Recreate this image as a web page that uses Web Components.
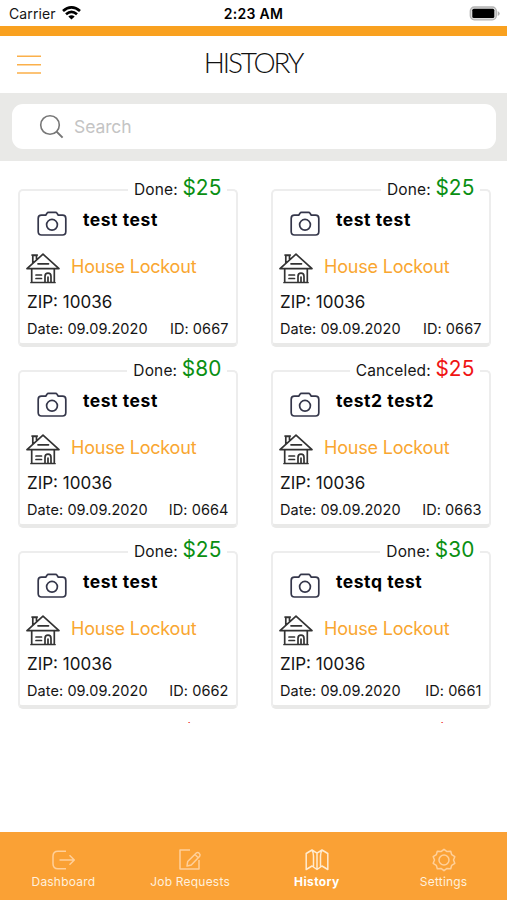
<!DOCTYPE html>
<html lang="en"><head><meta charset="utf-8"><title>History</title>
<style>
html,body{margin:0;height:900px;overflow:hidden;background:#fff}
body{font-family:Inter,"Liberation Sans",sans-serif;color:#151515}
</style></head><body>
<history-app></history-app>
<script>
const define=(name,html)=>customElements.define(name,class extends HTMLElement{
  constructor(){super();this.attachShadow({mode:'open'})}
  connectedCallback(){this.shadowRoot.innerHTML=html(this);}
});

define('status-bar',()=>`<style>
:host{display:grid;grid-template-columns:1fr auto 1fr;align-items:center;height:26px;padding:1px 7px 0 9px;box-sizing:border-box;font-size:14px}
.l{display:flex;align-items:center;gap:6px;letter-spacing:.1px;margin-top:-1px}
.t{font-weight:600;font-size:14px;letter-spacing:.3px;color:#000;margin-right:2px}
.r{justify-self:end;display:flex}svg{display:block}
</style>
<div class="l"><span>Carrier</span><svg width="19" height="14" viewBox="0 0 19 14" fill="none" stroke="#000" stroke-width="2.7"><path d="M1 5.1Q9.5-2.3 18 5.1M4 8.3Q9.500 3.500 15 8.300"/><path d="M9.500 13.500 6.300 10.500Q9.500 7.800 12.700 10.500Z" fill="#000" stroke="none"/></svg></div>
<div class="t">2:23 AM</div>
<div class="r"><svg width="31" height="15" viewBox="0 0 31 15"><rect x="1.300" y="1" width="26" height="12.800" rx="4" fill="#ddd" stroke="#b4b4b4" stroke-width="1.300"/><rect x="3.300" y="2.800" width="22" height="9.200" rx="1.500" fill="#000"/><path d="M28.700 5v5q2-1 2-2.500t-2-2.500z" fill="#b0b0b0"/></svg></div>`);

define('page-header',()=>`<style>
:host{display:grid;grid-template-columns:1fr auto 1fr;align-items:center;height:67px;border-top:10px solid #f9a11f;box-sizing:border-box;padding:0 17px}
h1{margin:0;font:300 28px/30px Lato,sans-serif;letter-spacing:-2.200px;color:#111;padding:0 1px 6px 0}
svg{display:block}
</style>
<svg width="24" height="20" viewBox="0 0 24 20" stroke="#fbb04a" stroke-width="1.500"><path d="M0 1.300H24M0 9.700H24M0 18H24"/></svg>
<h1><slot></slot></h1><span></span>`);

define('search-field',()=>`<style>
:host{display:block;background:#e9e9e7;padding:11px 11.500px 11px 12px;height:67.500px;box-sizing:border-box}
div{height:45px;border-radius:11px;background:#fff;display:flex;align-items:center;padding-left:27px;gap:10px;font-size:17.500px;color:#c4c4c4;letter-spacing:-.1px}
</style>
<div><svg width="25" height="25" viewBox="0 0 25 25" fill="none" stroke="#777" stroke-width="1.600"><circle cx="11" cy="11" r="9.300"/><path d="m17.600 17.600 6 6" stroke-width="2"/></svg><span><slot></slot></span></div>`);

define('camera-icon',()=>`<style>:host,svg{display:block}</style>
<svg width="30" height="26" viewBox="0 0 30 26" fill="none" stroke="#34364a" stroke-width="1.700" stroke-linejoin="round"><path d="M4.500 4.200H8.700L10 2.200Q10.500 1.300 11.500 1.300H18.500Q19.500 1.300 20 2.200L21.300 4.200H25.500Q28.800 4.200 28.800 7.500V20.500Q28.800 24 25.500 24H4.500Q1.200 24 1.200 20.500V7.500Q1.200 4.200 4.500 4.200Z"/><circle cx="15" cy="13.800" r="5.400"/></svg>`);

define('house-icon',()=>`<style>:host,svg{display:block}</style>
<svg width="34" height="31" viewBox="0 0 34 31" fill="none" stroke="#333" stroke-width="1.700" stroke-linejoin="round" stroke-linecap="round"><path d="M6.800 10V2.500H10.500V6M6 2H11.300M17 1.200 1 15.600H33ZM12 10.800H22.500M5.700 15.600V29.500H28.300V15.600M10 22H15.500M10 25.500H15.500M19 29.300V23.500Q19 20.200 22 20.200T25 23.500V29.300M22 24V28.500M5 29.500H29"/></svg>`);

define('job-card',e=>{const a=n=>e.getAttribute(n)||'';
const peek=!e.hasAttribute('name');
return `<style>
:host{display:block;position:relative;height:158px;box-sizing:border-box;border:2px solid #ededed;border-top-width:2.500px;border-bottom:4px solid #e9e9e8;border-radius:5px;padding:0 7px 0 7.500px}
.legend{position:absolute;right:9px;top:-16px;background:#fff;padding:0 5px 0 6px;height:26px;line-height:26px;white-space:nowrap;font-size:15.500px;letter-spacing:.15px}
.peek{top:-14px}
b{font-weight:400;font-size:20.800px;color:#0a8f12}
:host([state=Canceled]) b{color:#f01414}
.who{display:flex;height:48px;padding:20px 0 0 10px;gap:16px;box-sizing:border-box}
.who span{font-weight:700;font-size:17.500px;line-height:20px;color:#000;margin-top:-1px;letter-spacing:.55px}
.job{display:flex;gap:11px;height:31px;margin:14px 0 0 -1px;color:#f9a630;font-size:18px;line-height:28px;letter-spacing:-.2px}
.zip{font-size:17px;line-height:20px;margin-top:8px;letter-spacing:0}
.meta{display:flex;justify-content:space-between;font-size:14.500px;line-height:18px;margin-top:8px;letter-spacing:.08px}
span{white-space:nowrap}
</style>
<div class="legend${peek?' peek':''}">${peek?'':a('state')+': '}<b>${a('price')}</b></div>`+(peek?'':`
<div class="who"><camera-icon></camera-icon><span>${a('name')}</span></div>
<div class="job"><house-icon></house-icon><span>House Lockout</span></div>
<div class="zip">ZIP: 10036</div>
<div class="meta"><span>Date: 09.09.2020</span><span>ID: ${a('job')}</span></div>`)});

define('job-list',()=>`<style>
:host{display:grid;grid-template-columns:220px 220px;column-gap:33px;row-gap:23px;grid-auto-rows:158px;padding:28.500px 0 0 17.500px;height:562px;box-sizing:border-box;overflow:hidden}
</style><slot></slot>`);

const icons={
dashboard:'<path d="M15 3.200H7Q2 3.200 2 8.200V15.800Q2 20.800 7 20.800H15M8.500 12H23M18.500 7.200 23.300 12 18.500 16.800"/>',
jobs:'<path d="M12 2H2V21H21V12M9 18 9.700 13.500 18.300 5Q19.700 3.800 21.200 5.200T21.700 8.200L13.300 17ZM17 6.500 20 9.500"/>',
history:'<path d="M1.200 5.500 7 2 12 5.200 17 2 22.800 5.500V21.500L17 18 12 21.500 7 18 1.200 21.500ZM7 2.500Q8.500 4 8.500 8V18.500M17 2.500Q15.500 4 15.500 8V18.500M12 5.500V21"/>',
settings:'<path d="M12 1.300 15 3.600 18.700 3.200 19.700 6.700 22.800 8.700 21.500 12 22.800 15.300 19.700 17.300 18.700 20.800 15 20.400 12 22.700 9 20.400 5.300 20.800 4.300 17.300 1.200 15.300 2.500 12 1.200 8.700 4.300 6.700 5.300 3.200 9 3.600Z"/><circle cx="12" cy="12" r="5"/>'};
define('tab-item',e=>`<style>
:host{display:flex;flex-direction:column;align-items:center;flex:1 1 0;padding-top:16px;color:#fff;font-size:12px;line-height:16px;letter-spacing:.2px}
svg{stroke:#ffd09a;margin-bottom:2px}span{color:#fff0dc}
:host([active]) span{font-weight:700;color:#fff;letter-spacing:.4px}:host([active]) svg{stroke:#ffebcf}
</style><svg width="24" height="24" viewBox="0 0 24 24" fill="none" stroke-width="1.500" stroke-linejoin="round">${icons[e.getAttribute('icon')]}</svg><span><slot></slot></span>`);

define('tab-bar',()=>`<style>:host{display:flex;height:68px;background:#faa135}</style><slot></slot>`);

define('history-app',()=>`<style>:host{display:flex;flex-direction:column;height:900px;width:507px}tab-bar{margin-top:auto}</style>
<status-bar></status-bar><page-header>HISTORY</page-header><search-field>Search</search-field>
<job-list>
<job-card state="Done" price="$25" name="test test" job="0667"></job-card>
<job-card state="Done" price="$25" name="test test" job="0667"></job-card>
<job-card state="Done" price="$80" name="test test" job="0664"></job-card>
<job-card state="Canceled" price="$25" name="test2 test2" job="0663"></job-card>
<job-card state="Done" price="$25" name="test test" job="0662"></job-card>
<job-card state="Done" price="$30" name="testq test" job="0661"></job-card>
<job-card state="Canceled" price="$25"></job-card>
<job-card state="Canceled" price="$25"></job-card>
</job-list>
<tab-bar><tab-item icon="dashboard">Dashboard</tab-item><tab-item icon="jobs">Job Requests</tab-item><tab-item icon="history" active>History</tab-item><tab-item icon="settings">Settings</tab-item></tab-bar>`);
</script></body></html>
